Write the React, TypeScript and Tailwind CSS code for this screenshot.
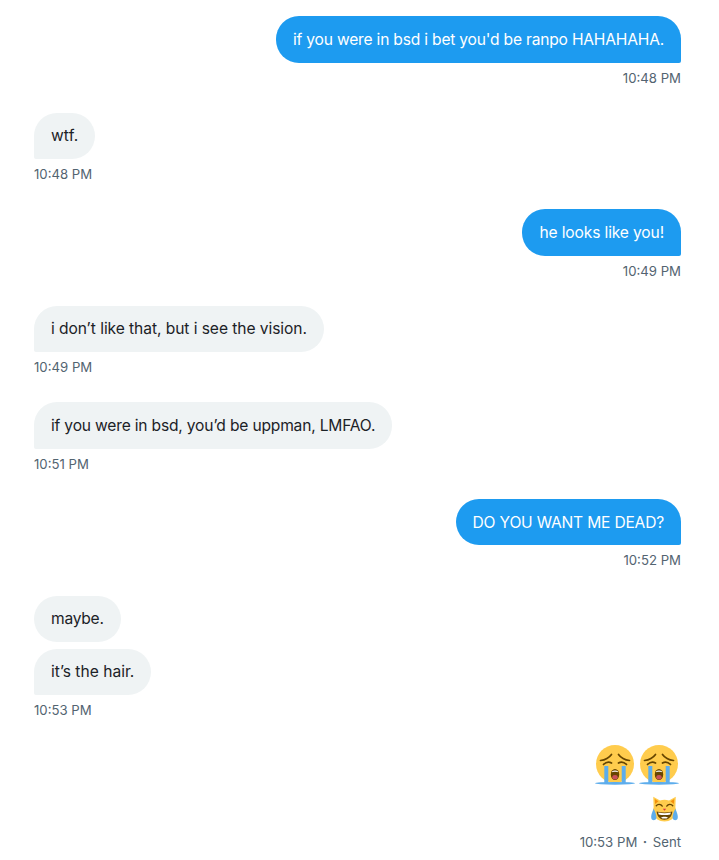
const font = "[font-family:Inter,'Liberation_Sans',sans-serif]";

type Msg = { text: string; time: string; mine?: boolean; tracking?: string };

const sent = "rounded-l-[23px] rounded-tr-[23px] rounded-br-[2px] bg-[#1d9bf0] text-white";
const received = "rounded-r-[23px] rounded-tl-[23px] rounded-bl-[2px] bg-[#eff3f4] text-[#1c2227]";

function Bubble({ text, mine, tail = true, tracking = "tracking-[-0.1px]" }: { text: string; mine?: boolean; tail?: boolean; tracking?: string }) {
  return (
    <div
      className={`h-[46.5px] px-[17px] flex items-center text-[15.6px] ${tracking} ${
        mine ? sent : tail ? received : "rounded-[23px] bg-[#eff3f4] text-[#1c2227]"
      }`}
    >
      {text}
    </div>
  );
}

function Time({ children }: { children: React.ReactNode }) {
  return <div className="mt-[6px] h-[18px] leading-[18px] text-[13.2px] text-[#536471]">{children}</div>;
}

function Message({ text, time, mine, tracking }: Msg) {
  return (
    <div className={`flex flex-col mb-[26.1px] ${mine ? "items-end" : "items-start"}`}>
      <Bubble text={text} mine={mine} tracking={tracking} />
      <Time>{time}</Time>
    </div>
  );
}

function SobEmoji() {
  return (
    <svg viewBox="0 0 40 40" className="w-[40px] h-[40px]">
      <circle cx="20" cy="19" r="19" fill="#FFCC4D" />
      <path d="M5.500 15.500c4.500-.5 8.500-2.500 11-6M34.500 15.500c-4.500-.5-8.500-2.500-11-6" stroke="#664500" strokeWidth="1.700" fill="none" strokeLinecap="round" />
      <path d="M8.500 19.500c2.500-2.500 5.500-3 8-1.500M31.500 19.500c-2.500-2.500-5.500-3-8-1.500" stroke="#664500" strokeWidth="1.700" fill="none" strokeLinecap="round" />
      <ellipse cx="20" cy="29.500" rx="4.200" ry="5.500" fill="#664500" />
      <ellipse cx="20" cy="32.300" rx="2.700" ry="2.200" fill="#C8505A" />
      <path d="M17 26.200c1.500-1 4.500-1 6 0l-.5 1c-1.500-.5-3.500-.5-5 0z" fill="#fff" />
      <path d="M9.300 21h4v17h-4zM26.700 21h4v17h-4z" fill="#5DADEC" />
      <ellipse cx="20" cy="38.300" rx="20" ry="1.400" fill="#5DADEC" />
    </svg>
  );
}

function CatEmoji() {
  return (
    <svg viewBox="0 0 36 36" className="w-[27px] h-[27px]">
      <path d="M3 1l9 5c2-.6 4-1 6-1s4 .4 6 1l9-5-.5 14c1 3 1.500 6 .5 9-2 6-8 10-15 10S5 30 3 24c-1-3-.5-6 .5-9L3 1z" fill="#FFCC4D" />
      <path d="M5 4l5 3-4.500 3.500zM31 4l-5 3 4.500 3.500z" fill="#F4900C" />
      <path d="M7 13c2-2.500 6-2.500 8 .5M21 13.500c2-3 6-3 8-.5" stroke="#664500" strokeWidth="1.800" fill="none" strokeLinecap="round" />
      <path d="M15.800 17h4.400L18 19.500z" fill="#DD2E44" />
      <path d="M7.500 20.500c6.500 2 14.500 2 21 0-.5 7-5 11-10.500 11S8 27.500 7.500 20.500z" fill="#664500" />
      <path d="M9.500 22c5.500 1.200 11.500 1.200 17 0l-.8 2.500c-5 1.200-10.400 1.200-15.400 0z" fill="#fff" />
      <path d="M13 29c3 1.500 7 1.500 10 0-2.500-2-7.500-2-10 0z" fill="#fff" />
      <path d="M3.500 17c-2 5-4 9-3 13 .8 3 5.500 3 6.500 0 .8-3-1-8-3.500-13zM32.500 17c2 5 4 9 3 13-.8 3-5.500 3-6.500 0-.8-3 1-8 3.500-13z" fill="#5DADEC" />
    </svg>
  );
}

export default function App() {
  return (
    <div className={`w-[719px] h-[860px] overflow-hidden bg-white pl-[34px] pr-[38px] pt-[16px] ${font}`}>
      <Message mine tracking="tracking-[-0.2px]" text="if you were in bsd i bet you'd be ranpo HAHAHAHA." time="10:48 PM" />
      <Message tracking="tracking-[0.1px]" text="wtf." time="10:48 PM" />
      <Message mine tracking="tracking-[-0.14px]" text="he looks like you!" time="10:49 PM" />
      <Message tracking="tracking-[-0.07px]" text="i don’t like that, but i see the vision." time="10:49 PM" />
      <Message tracking="tracking-[-0.19px]" text="if you were in bsd, you’d be uppman, LMFAO." time="10:51 PM" />
      <Message mine tracking="tracking-[-0.2px]" text="DO YOU WANT ME DEAD?" time="10:52 PM" />

      <div className="flex flex-col items-start mb-[26.1px]">
        <Bubble text="maybe." tail={false} tracking="tracking-[-0.25px]" />
        <div className="h-[6.5px]" />
        <Bubble text="it’s the hair." tracking="tracking-[0px]" />
        <Time>10:53 PM</Time>
      </div>

      <div className="flex flex-col items-end">
        <div className="flex gap-[4px] mr-[2px]">
          <SobEmoji />
          <SobEmoji />
        </div>
        <div className="mt-[11px] mr-[3px]">
          <CatEmoji />
        </div>
        <div className="mt-[4px]">
          <Time>
            10:53 PM<span className="mx-[5.5px] font-bold">·</span>Sent
          </Time>
        </div>
      </div>
    </div>
  );
}
